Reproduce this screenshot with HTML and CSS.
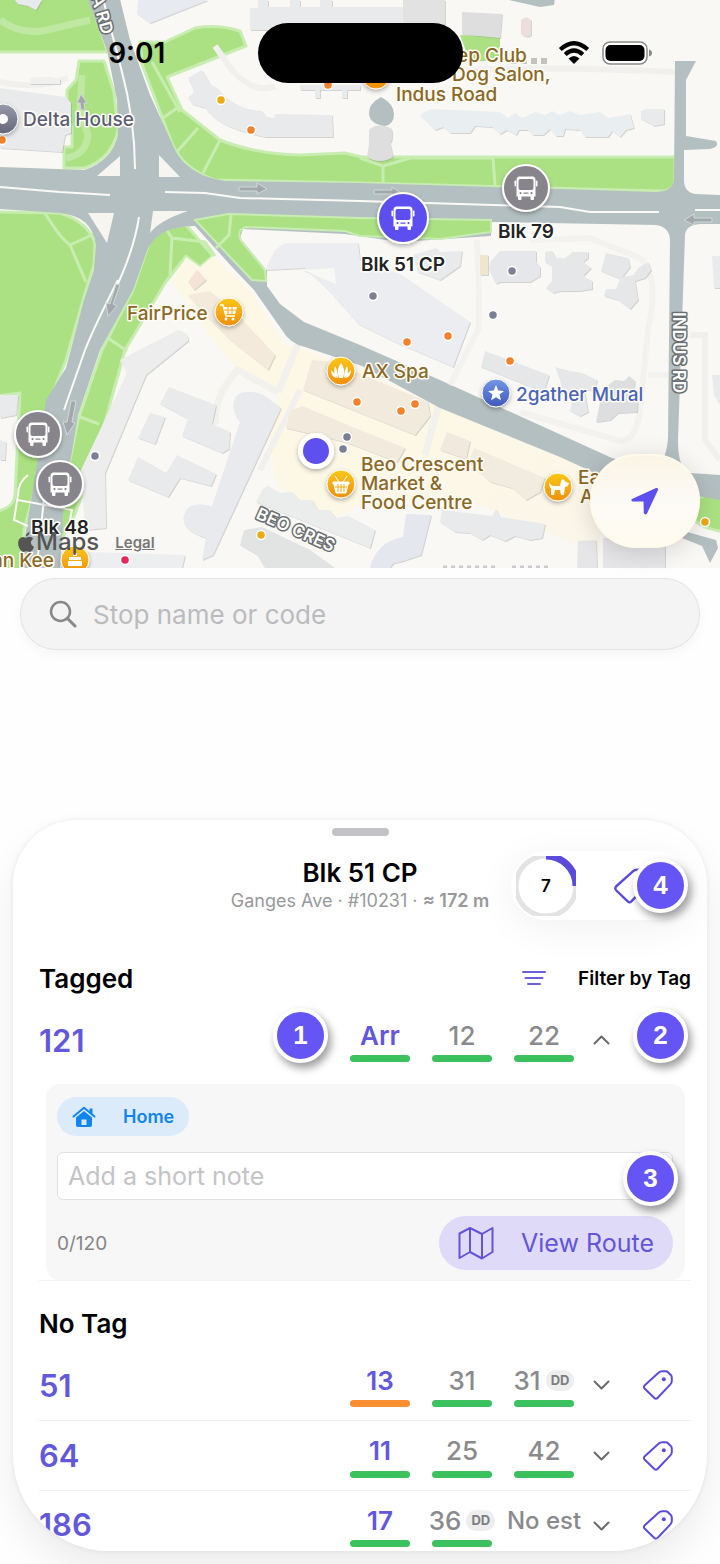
FILE: index.html
```html
<!DOCTYPE html>
<html lang="en">
<head>
    <meta charset="UTF-8">
    <meta name="viewport" content="width=device-width, initial-scale=1.0">
    <title>Bus stops</title>
    <link rel="stylesheet" href="styles.css">
</head>
<body>
    <!-- shared icons -->
    <svg class="sprite" aria-hidden="true">
        <symbol id="bus" viewBox="-14 -14 28 28">
            <path fill="#fff" fill-rule="evenodd" d="M-6.500-11.500H6.500Q9.500-11.500 9.500-8V8.500H8V11Q8 12 7 12H5.500Q4.500 12 4.500 11V8.500H-4.500V11Q-4.500 12-5.500 12H-7Q-8 12-8 11V8.500H-9.500V-8Q-9.500-11.500-6.500-11.500ZM-5.500-9Q-7.500-9-7.500-7V0Q-7.500 2-5.500 2H5.500Q7.500 2 7.500 0V-7Q7.500-9 5.500-9ZM-5.500 4A1.100 1.100 0 1 0-5.500 6.200A1.100 1.100 0 1 0-5.500 4ZM5.500 4A1.100 1.100 0 1 0 5.500 6.200A1.100 1.100 0 1 0 5.500 4ZM-2.500 4.500V5.700H2.500V4.500Z"/>
            <rect x="-11.500" y="-7.500" width="1.600" height="6" rx=".8" fill="#fff"/>
            <rect x="9.900" y="-7.500" width="1.600" height="6" rx=".8" fill="#fff"/>
        </symbol>
        <symbol id="tag" viewBox="0 0 32 32">
            <path d="M16.500 3.800Q18.200 2.200 20.200 2.200H23.500Q25 2.200 26 3.200L28.800 6Q29.800 7 29.800 8.500V12Q29.800 14 28.400 15.400L15.500 29Q14 30.600 12.400 29L2.800 19.800Q1 17.800 2.800 16.200Z" fill="none" stroke="currentColor" stroke-width="2" stroke-linejoin="round"/>
            <circle cx="21.800" cy="10.200" r="2" fill="currentColor"/>
        </symbol>
        <symbol id="chevron" viewBox="0 0 18 12">
            <path d="M2 2.500 9 9.500 16 2.500" fill="none" stroke="currentColor" stroke-width="2" stroke-linecap="round" stroke-linejoin="round"/>
        </symbol>
    </svg>

    <main class="app">
        <section class="map">
            <svg class="map-canvas" viewBox="0 0 720 568" role="img" aria-label="Map">
                <defs>
                    <linearGradient id="gold" x1="0" y1="0" x2="0" y2="1"><stop offset="0" stop-color="#fac818"/><stop offset="1" stop-color="#f08f0d"/></linearGradient>
                    <linearGradient id="blue" x1="0" y1="0" x2="0" y2="1"><stop offset="0" stop-color="#7397e6"/><stop offset="1" stop-color="#4058bb"/></linearGradient>
                    <linearGradient id="slate" x1="0" y1="0" x2="0" y2="1"><stop offset="0" stop-color="#989aa8"/><stop offset="1" stop-color="#64677b"/></linearGradient>
                    <linearGradient id="shops" x1="0" y1="0" x2="1" y2="1"><stop offset=".6" stop-color="#fdf7e6"/><stop offset="1" stop-color="#fbf6ea"/></linearGradient>
                    <filter id="drop" x="-50%" y="-50%" width="200%" height="200%"><feDropShadow dx="0" dy="2" stdDeviation="2" flood-opacity=".3"/></filter>
                    <filter id="lift"><feDropShadow dx="1" dy="1" stdDeviation=".4" flood-color="#8a8a90" flood-opacity=".35"/></filter>
                </defs>
                <rect width="720" height="568" fill="#f9f8f4"/>

                <!-- parks -->
                <g fill="#abe183" stroke="#c8edb1" stroke-width="3" stroke-linejoin="round">
                    <path d="M-5-5H88L108 52H-5Z"/>
                    <path d="M79 61H104L114 92 118 130Q112 158 85 168H64V147H72V128L67 118V90L76 80Z"/>
                    <path d="M140 42 165 42 195 28Q218 24 240 31L246 46 167 77 182 110 220 140Q255 154 300 155L345 153 362 157H675V181Q673 192 660 191L360 183 215 180Q185 170 173 146L142 64Z"/>
                    <path d="M-5 212 60 213Q88 222 95 243L94 265 86 290 66 360 52 395 40 470 24 530 20 575H-5V512Q14 508 15 495L20 393 -5 396Z"/>
                    <path d="M150 240 165 228 186 225 213 256 200 267 186 256 165 283 125 350 100 440 82 475 82 495 72 522 58 545 62 500 78 420 102 350 133 290Z"/>
                    <path d="M695 500Q710 492 725 490V532Q700 528 695 520Z"/>
                    <path d="M460 35 500 37V60L470 62Z" stroke="none"/>
                </g>

                <!-- shops area -->
                <path d="M186 257 200 267 213 256 248 288 285 345 305 350 360 370 430 402 600 472V555L480 505 440 498 360 505 330 520 277 486 268 430 278 392 237 370 205 330 172 282Z" fill="url(#shops)"/>
                <path d="M278 392 237 370 228 382Q215 400 215 425M298 344 278 392M440 400 425 455" fill="none" stroke="#f3f1ec" stroke-width="7"/>

                <!-- footpaths -->
                <g fill="none" stroke="#c8edb1" stroke-width="3">
                    <path d="M45 213Q60 238 70 245L86 282M70 245 94 234M152 62 180 112M160 120 180 106M176 153 198 128M203 173 220 140M155 212 172 238 205 242 215 256M172 238 170 275M108 338 127 351M80 417 99 424M360 158 383 166 383 182M383 166 410 158H493L495 185"/>
                    <path d="M82 75 80 110 88 135Q86 155 66 158M0 20Q25 38 55 28L90 20" stroke-width="7" opacity=".7"/>
                </g>
                <path d="M215 46 232 70Q255 95 275 86M460 70Q560 66 675 72M0 82Q40 90 68 78M300 390 260 470M690 335H705V440L720 460" fill="none" stroke="#f2f0ee" stroke-width="6"/>

                <!-- buildings -->
                <g fill="#e9eaec" filter="url(#lift)">
                    <path d="M138 0H208L150 23 137 14Z" fill="#e7eaf1"/>
                    <path d="M15 0H42L36 10 28 6 18 4Z"/>
                    <path d="M250 8H258V0H268V7H290V0H300V7H320V0H332V7H420V30H250Z"/>
                    <path d="M188 78 202 70 210 84 217 88Q235 110 262 111L266 117 274 118 275 114 332 115 333 137 265 137Q218 128 205 108L192 104 188 98 194 92Z"/>
                    <path d="M0 88 66 97 71 103V133L65 135 62 152 0 148Z"/>
                    <path d="M30 78Q45 75 60 79V84H30Z" fill="#f0f0ef"/>
                    <path d="M300 85H360V90H347V98H342V90H320V98H315V90H300Z"/>
                    <path d="M462 12 502 14 500 38 462 34Z" fill="#dededf"/>
                    <path d="M403 0H445V24H403Z" fill="#e2e2e3"/>
                    <path d="M521 20Q526 15 531 20V35Q526 39 521 34Z" fill="#ecdedd"/>
                    <path d="M420 115 430 109 500 112 508 118 515 113 522 118 535 112 545 115 552 111 560 115 570 111 580 115 600 112 608 118 630 114 634 128 626 130 620 137 612 131 608 137 585 137 580 130 565 129 563 136 556 136 550 129 543 135 533 135 528 130 519 130 516 135 507 130 500 134 492 127 475 126 470 133 450 133 443 127 435 130Z" fill="#e9eff0"/>
                    <path d="M641 111 646 109H664V124L654 126 641 119Z"/>
                    <path d="M369 130Q376 122 391 128 394 137 390 143L393 157Q380 165 367 157L369 144Z" fill="#dedede"/>
                    <path d="M120 360 178 330Q190 334 188 341L146 375 105 473 106 528 85 530 81 470 127 373Z" fill="#ededed"/>
                    <path d="M169 387 216 405 212 424 230 432 229 449 222 453 182 436 188 419 160 404Z"/>
                    <path d="M150 413 165 417 155 444 138 438Z"/>
                    <path d="M138 457 166 473 177 455 216 474 211 486 180 478 168 497 128 480Z"/>
                    <path d="M235 398Q240 388 262 394L281 408 213 555 202 560 206 538Q180 530 184 515T212 506L240 422Q230 410 235 398Z" fill="#e8eaee"/>
                    <path d="M188 295 210 291 240 318 275 355 268 370 230 340 210 320Z" fill="#f3eadc"/>
                    <path d="M188 282 197 270 206 280 194 290Z" fill="#f5e3d7"/>
                    <path d="M312 360 332 362 428 402 430 416 415 435 303 390Z" fill="#f2ebdd"/>
                    <path d="M290 411 302 406 360 430 405 448 397 462 345 442 286 428Z" fill="#f2ebdd"/>
                    <path d="M447 432 470 441 466 459 440 450Z" fill="#f1e9dd"/>
                    <path d="M474 448 545 478 540 492 526 500 512 488 490 482 468 462Z" fill="#f1ecdf"/>
                    <path d="M262 490 268 486 280 493 292 492 300 500 312 500 318 510 330 510 336 518 348 516 375 530 370 548 256 502Z" fill="#ebecec"/>
                    <path d="M244 530 262 527 310 550 335 568H265L257 555 240 545Z" fill="#e2e4e3"/>
                    <path d="M442 510 492 516 496 509 500 517 545 524 542 538 530 540 515 536 505 541 490 535 482 540 470 533 455 532 440 522Z"/>
                    <path d="M406 514 431 515 421 555 400 562Q392 562 390 568H370Q376 542 403 537Z" fill="#e4e7ed"/>
                    <path d="M55 551 185 555 182 568H52Z" fill="#eceef0"/>
                    <path d="M578 541 596 540 597 568H577ZM603 538H665V568H603Z" fill="#e6e6e8"/>
                    <path d="M0 440 6 442 5 460 0 460ZM0 395 18 395 16 415 0 418Z"/>
                    <path d="M712 256H720V288H714ZM712 375H720V405L714 395Z"/>
                </g>
                <path d="M443 567H498M512 567H550" stroke="#c9cbcf" stroke-width="3" stroke-dasharray="4 4"/>
                <path d="M511 61H548" stroke="#c4c2bd" stroke-width="6" stroke-dasharray="6 4"/>

                <!-- roads -->
                <g fill="#b4bfc1">
                    <path d="M86-5 107 50 117 100 118 135Q112 160 85 170L0 167V209L60 213Q92 216 96 245L94 270 84 300 66 368 46 400 36 470 20 568H60L64 500 78 415 100 350 133 290 148 248Q160 226 195 226L233 268 254 290 282 330Q290 344 305 347L362 366 440 408 560 457 610 480 720 500V475L690 473Q678 470 678 440L685 235Q686 225 700 224H720V195L695 194Q684 192 684 180L684 150 710 149Q720 147 716 141L686 136V80L696 61H675L674 180Q672 192 655 192L560 189 360 183 225 181Q190 176 176 152L150 95 130 40 119-5Z"/>
                    <path d="M500-2H555L554 5 540 7Z"/>
                    <path d="M385 126Q370 124 369 114T381 97Q394 104 394 114T385 126Z"/>
                    <path d="M680 530 716 540 718 548 710 563 702 546 682 538Z"/>
                </g>

                <!-- block south of Ganges Avenue -->
                <path d="M243 229 345 234 400 242 491 236V222L656 225Q670 227 670 241L668 438Q666 468 648 468L612 458 440 380 360 345 304 322 280 304 267 286V271L240 238Z" fill="#f9f8f4"/>
                <path d="M195 220 228 214 360 218 491 220V232L440 239 360 236 345 231 246 227Q236 230 241 241L265 270 266 281 252 280Z" fill="#abe183" stroke="#c8edb1" stroke-width="2"/>
                <path d="M231 215 229 235 216 248" fill="none" stroke="#c8edb1" stroke-width="3"/>
                <path d="M530 240 590 238 640 258Q660 275 648 330L640 410Q635 450 610 438L520 412M477 240Q480 300 478 330L450 385M648 375H668" fill="none" stroke="#f3f2ef" stroke-width="6"/>
                <g fill="#e5e7e8" filter="url(#lift)">
                    <path d="M265 270 275 250 285 243H358L360 260 400 274 470 322 453 367 395 342 358 324 330 292 305 268Z" fill="#ecedf0"/>
                    <path d="M303 270 334 268 336 284Z" fill="#f8f8f5"/>
                    <path d="M413 255 436 248 440 252 462 251 460 266 440 280 418 272Z" fill="#e8eaeb"/>
                    <path d="M480 255H488V275H480Z" fill="#eee6cd"/>
                    <path d="M490 262 500 251H536V262L540 267V276L530 282H500L496 284 489 270Z" fill="#e6e7ea"/>
                    <path d="M545 252 552 251 556 258 565 258 573 252H588V258L583 262 591 268 583 276 592 281V289L580 291H560L553 293 546 288 552 281V266L545 262Z"/>
                    <path d="M606 253 628 258 630 267 622 277 634 275 638 268 648 262 651 270 645 278 635 281 638 300 630 309 618 300 604 296 606 289 616 289 620 279 601 271Z"/>
                    <path d="M485 351 549 375 544 392 481 367Z"/>
                    <path d="M555 367 570 371 582 373 597 380 594 391 584 389 586 400 588 412 580 416 570 411 572 402 562 390 560 380Z"/>
                    <path d="M600 402 610 392 607 386 615 380 624 381 629 376 635 381 634 388 638 394 637 412 618 413 610 420 596 422Z" fill="#dcdedf"/>
                </g>

                <!-- traffic islands and lane lines -->
                <path d="M120 156V176H97ZM159 155 180 177H159ZM88 213H114L107 243ZM153 211H188Q160 220 150 233Z" fill="#f7f5ef"/>
                <g fill="none" stroke="#fbfaf6" stroke-width="2">
                    <path d="M102-5 121 68Q135 120 135 169M0 187 60 192 110 195M165 192 205 193 240 198 360 201 560 207 590 212H659M695 210H720M139 217Q134 250 115 290M118 280Q95 325 85 350L64 410M46 480 38 555"/>
                    <path d="M28 475Q18 482 18 495L14 520 28 526M18 500 72 510 66 540"/>
                </g>
                <g fill="#a3a9ab" stroke="#d3d8d8" stroke-width="1">
                    <path d="M239 187H257V183L267 189 257 194V191H239ZM374 190H392V187L401 193 392 197V194H374ZM712 218H694V214L684 220 694 225V222H712Z"/>
                    <path d="M120 285 113 304 117 306 108 316 106 303 110 304 116 284ZM76 401 72 422 75 423 67 435 63 422 67 422 71 401Z"/>
                    <path d="M81 110 80 103H77L81 94 87 103H84L85 110Z"/>
                </g>

                <!-- road names -->
                <g class="road-name">
                    <text transform="translate(80 -42) rotate(74)">DELTA RD</text>
                    <text transform="translate(673 312) rotate(90)">INDUS RD</text>
                    <text transform="translate(255 518) rotate(24)">BEO CRES</text>
                </g>

                <!-- small places -->
                <g stroke="#fff" stroke-width="1.500">
                    <g fill="#f5822a"><circle cx="251" cy="130" r="4.500"/><circle cx="328" cy="85" r="4.500"/><circle cx="2" cy="140" r="4.500"/><circle cx="407" cy="342" r="4.500"/><circle cx="448" cy="336" r="4.500"/><circle cx="510" cy="361" r="4.500"/><circle cx="357" cy="402" r="4.500"/><circle cx="401" cy="411" r="4.500"/><circle cx="415" cy="404" r="4.500"/></g>
                    <g fill="#ecab12"><circle cx="221" cy="100" r="4.500"/><circle cx="261" cy="535" r="4.500"/><circle cx="705" cy="522" r="4.500"/></g>
                    <g fill="#7c8095"><circle cx="512" cy="271" r="4.500"/><circle cx="373" cy="296" r="4.500"/><circle cx="493" cy="315" r="4.500"/><circle cx="95" cy="456" r="4.500"/><circle cx="347" cy="437" r="4.500"/><circle cx="343" cy="449" r="4.500"/></g>
                    <circle cx="125" cy="560" r="4.500" fill="#e6265c"/>
                </g>

                <!-- places -->
                <g stroke="#fff" stroke-width="1" filter="url(#drop)">
                    <circle cx="3" cy="119" r="15" fill="url(#slate)"/>
                    <circle cx="229" cy="312" r="14" fill="url(#gold)"/>
                    <circle cx="341" cy="371" r="14" fill="url(#gold)"/>
                    <circle cx="341" cy="484" r="14" fill="url(#gold)"/>
                    <circle cx="558" cy="487" r="14" fill="url(#gold)"/>
                    <circle cx="376" cy="75" r="14" fill="#f5920f"/>
                    <circle cx="75" cy="560" r="14" fill="url(#gold)"/>
                    <circle cx="496" cy="393" r="14" fill="url(#blue)"/>
                </g>
                <g fill="#fff">
                    <circle cx="3" cy="119" r="5"/>
                    <path d="M496 385 498.200 390.500 504 391 499.500 394.600 501 400.300 496 397.200 491 400.300 492.500 394.600 488 391 493.800 390.500Z"/>
                    <path d="M341 363Q346 369 343 378H339Q336 369 341 363ZM335 366Q338 371 338 378 332 373 335 366ZM347 366Q344 371 344 378 350 373 347 366ZM331 370Q335 373 337 378 331 377 331 370ZM351 370Q347 373 345 378 351 377 351 370Z"/>
                    <path d="M333 482H349V484H348L346 493H336L334 484H333ZM335 476 339 482M347 476 343 482" stroke="#fff" stroke-width="1"/>
                    <path d="M549 482Q551 486 554 486H560L561 481 563 479 566 482 569 483Q568 487 565 487L564 495H561L560 490H555L554 495H551V488Q549 487 549 482Z"/>
                    <path d="M68 561H82V566H68ZM69 557H81V560H69ZM73 553H77V556H73Z"/>
                    <circle cx="226" cy="319" r="1.500"/><circle cx="233" cy="319" r="1.500"/>
                    <path d="M223 307H237L235 314H225Z"/>
                </g>
                <path d="M220 305H223L226 316H235" fill="none" stroke="#fff" stroke-width="1.500"/>
                <path d="M224 310H236M228 307V314M232 307V314M335 487H347M338 484V492M341 484V492M344 484V492" stroke="#f3ab13" stroke-width="1" fill="none"/>

                <g class="place">
                    <text x="457" y="62">ep Club</text>
                    <text x="452" y="81">Dog Salon,</text>
                    <text x="396" y="101">Indus Road</text>
                    <text x="127" y="320">FairPrice</text>
                    <text x="362" y="378">AX Spa</text>
                    <text x="361" y="471">Beo Crescent</text>
                    <text x="361" y="490">Market &amp;</text>
                    <text x="361" y="509">Food Centre</text>
                    <text x="578" y="484">East</text>
                    <text x="580" y="503">Ave</text>
                    <text x="-8" y="567">an Kee</text>
                    <text x="23" y="126" class="building">Delta House</text>
                    <text x="516" y="401" class="landmark">2gather Mural</text>
                </g>

                <!-- my position -->
                <circle cx="316" cy="451" r="18" fill="#fff" filter="url(#drop)"/>
                <circle cx="316" cy="451" r="13" fill="#5d50ef"/>

                <!-- bus stops -->
                <g stroke="#fff" stroke-width="2" fill="#87858b" filter="url(#drop)">
                    <circle cx="526" cy="188" r="23"/>
                    <circle cx="38" cy="434" r="23"/>
                    <circle cx="60" cy="484" r="23"/>
                    <circle cx="403" cy="218" r="25" fill="#5d50ef"/>
                </g>
                <use href="#bus" x="512" y="174" width="28" height="28"/>
                <use href="#bus" x="24" y="420" width="28" height="28"/>
                <use href="#bus" x="46" y="470" width="28" height="28"/>
                <use href="#bus" x="389" y="204" width="28" height="28"/>
                <g class="stop-name">
                    <text x="526" y="238">Blk 79</text>
                    <text x="403" y="271">Blk 51 CP</text>
                    <text x="60" y="534">Blk 48</text>
                </g>
            </svg>

            <div class="status-bar">
                <time class="clock">9:01</time>
                <div class="island"></div>
                <div class="status-icons">
                    <svg width="32" height="24" viewBox="0 0 32 24" aria-label="Wi-Fi">
                        <path d="M2.300 8.500Q16-4 29.700 8.500M7.200 13.500Q16 5.500 24.800 13.500" fill="none" stroke="#000" stroke-width="4.200"/>
                        <path d="M10.500 17.500Q16 12.500 21.500 17.500L16 23Z"/>
                    </svg>
                    <svg width="50" height="24" viewBox="0 0 50 24" aria-label="Battery">
                        <rect x="1" y="1" width="44" height="22" rx="7" fill="#fff" stroke="#8b8b89" stroke-width="1.500"/>
                        <rect x="3.500" y="4" width="39" height="16" rx="5"/>
                        <path d="M47 8.500Q50 9.500 50 12T47 15.500Z" fill="#8b8b89"/>
                    </svg>
                </div>
            </div>

            <div class="attribution">
                <span class="maps-logo">
                    <svg width="16" height="20" viewBox="0 0 16 20" aria-hidden="true"><path fill="currentColor" d="M8 6Q9.500 4.800 11.500 4.800 14 5 15.200 6.800 12.600 8.500 12.900 11 13.200 13.800 16 15 14.300 19.600 11.800 20 10 19.300 8.500 19.200 7 19.300 5.400 20 3.500 20 1.500 16.500-.800 12 .800 7.800 2.300 4.900 5 4.900 6.500 5 8 6ZM7.800 4.500Q7.800 1.300 11.500 0 11.500 3.500 7.800 4.500Z"/></svg>
                    Maps
                </span>
                <a href="#legal">Legal</a>
            </div>

            <button class="locate" type="button" aria-label="My location">
                <svg width="30" height="30" viewBox="0 0 30 30"><path d="M26 2 2 13Q.500 14.500 2.500 15.500H13.500L13.800 27Q15 29.500 17 27.500L28 4Q28.500 1.500 26 2Z" fill="#5d50ef"/></svg>
            </button>
        </section>

        <form class="search">
            <label for="stop-search" aria-label="Search stops">
                <svg width="28" height="28" viewBox="0 0 28 28"><circle cx="11.500" cy="11.500" r="9.500" fill="none" stroke="#88888a" stroke-width="2.500"/><path d="M18.500 18.500 26 26" stroke="#88888a" stroke-width="3" stroke-linecap="round"/></svg>
            </label>
            <input id="stop-search" type="text" placeholder="Stop name or code">
        </form>

        <section class="sheet">
            <header class="sheet-header">
                <div class="handle"></div>
                <div class="stop">
                    <h1>Blk 51 CP</h1>
                    <p>Ganges Ave · #10231 · <b>≈ 172 m</b></p>
                </div>
                <div class="actions">
                    <div class="countdown">
                        <svg width="60" height="60" viewBox="0 0 60 60" aria-hidden="true">
                            <circle cx="30" cy="30" r="30" fill="none" stroke="#e3e3e3" stroke-width="5"/>
                            <path d="M30 0A30 30 0 0 1 60 30" fill="none" stroke="#5b4bdb" stroke-width="7"/>
                        </svg>
                        <span>7</span>
                    </div>
                    <button class="icon-button" type="button" aria-label="Tag stop"><svg class="tag-large"><use href="#tag"/></svg></button>
                    <span class="marker marker-4">4</span>
                </div>
            </header>

            <div class="section-head">
                <h2>Tagged</h2>
                <button class="filter" type="button">
                    <svg width="24" height="16" viewBox="0 0 24 16"><path d="M1 2H23M3.500 8H20.500M6 14H18" stroke="#6b5fdc" stroke-width="2" stroke-linecap="round"/></svg>
                    Filter by Tag
                </button>
            </div>
            <div class="service">
                <span class="number">121</span>
                <span class="marker marker-1">1</span>
                <div class="arrivals">
                    <span class="arrival next">Arr</span>
                    <span class="arrival">12</span>
                    <span class="arrival">22</span>
                </div>
                <button class="toggle open" type="button" aria-label="Collapse"><svg><use href="#chevron"/></svg></button>
                <span class="marker marker-2">2</span>
            </div>
            <div class="details">
                <div class="panel">
                    <button class="chip" type="button">
                        <svg width="24" height="22" viewBox="0 0 24 22"><path d="M1.500 10.500 12 1.800 22.500 10.500" fill="none" stroke="currentColor" stroke-width="2" stroke-linecap="round" stroke-linejoin="round"/><path fill="currentColor" fill-rule="evenodd" d="M17.500 2.500H20.500V8L17.500 5.500ZM12 5 20 11.500V19Q20 21 18 21H6Q4 21 4 19V11.500ZM9.500 13.500V19H14.500V13.500Z"/></svg>
                        Home
                    </button>
                    <div class="note">
                        <input id="note" type="text" maxlength="120" placeholder="Add a short note" aria-label="Add a short note">
                        <span class="marker marker-3">3</span>
                    </div>
                    <div class="panel-foot">
                        <label class="count" for="note">0/120</label>
                        <button class="route" type="button">
                            <svg width="36" height="34" viewBox="0 0 36 34"><path d="M1.500 7.500 12 2 24 8 34.500 2V26L24 32.500 12 26 1.500 32ZM12 2V26M24 8V32.500" fill="none" stroke="currentColor" stroke-width="2" stroke-linejoin="round"/></svg>
                            View Route
                        </button>
                    </div>
                </div>
            </div>

            <div class="section-head untagged">
                <h2>No Tag</h2>
            </div>
            <div class="service">
                <span class="number">51</span>
                <div class="arrivals">
                    <span class="arrival next busy">13</span>
                    <span class="arrival">31</span>
                    <span class="arrival">31<i class="deck">DD</i></span>
                </div>
                <button class="toggle" type="button" aria-label="Expand"><svg><use href="#chevron"/></svg></button>
                <button class="icon-button" type="button" aria-label="Tag 51"><svg class="tag"><use href="#tag"/></svg></button>
            </div>
            <div class="service">
                <span class="number">64</span>
                <div class="arrivals">
                    <span class="arrival next">11</span>
                    <span class="arrival">25</span>
                    <span class="arrival">42</span>
                </div>
                <button class="toggle" type="button" aria-label="Expand"><svg><use href="#chevron"/></svg></button>
                <button class="icon-button" type="button" aria-label="Tag 64"><svg class="tag"><use href="#tag"/></svg></button>
            </div>
            <div class="service">
                <span class="number">186</span>
                <div class="arrivals">
                    <span class="arrival next">17</span>
                    <span class="arrival">36<i class="deck">DD</i></span>
                    <span class="arrival none">No est</span>
                </div>
                <button class="toggle" type="button" aria-label="Expand"><svg><use href="#chevron"/></svg></button>
                <button class="icon-button" type="button" aria-label="Tag 186"><svg class="tag"><use href="#tag"/></svg></button>
            </div>
        </section>
    </main>
</body>
</html>
```
FILE: styles.css
```css
* { box-sizing: border-box; }
body {
    margin: 0;
    background: #fefefe;
    color: #000;
    font-family: Inter, "Liberation Sans", sans-serif;
}
button, input { font: inherit; color: inherit; border: 0; padding: 0; background: none; }
button { cursor: pointer; }
h1, h2, p { margin: 0; }
svg { display: block; }
.sprite { display: none; }
.app {
    min-height: 100vh;
    display: flex;
    flex-direction: column;
    overflow: hidden;
}

/* map */
.map { position: relative; }
.map-canvas { width: 100%; height: auto; }
.map text { font-weight: 600; paint-order: stroke; stroke-linejoin: round; }
.place text { font-size: 19px; font-weight: 500; fill: #8a6826; stroke: #fffdf6; stroke-width: 3px; }
.place .building { fill: #5c5d75; }
.place .landmark { fill: #4a64b8; }
.stop-name text { font-size: 19px; fill: #232323; stroke: #fff; stroke-width: 3px; text-anchor: middle; }
.road-name text { font-size: 17px; fill: #fff; stroke: #6a6e70; stroke-width: 3px; }
.status-bar {
    position: absolute;
    top: 23px;
    left: 0;
    right: 0;
    display: grid;
    grid-template-columns: 1fr 205px 1fr;
    align-items: center;
}
.clock { justify-self: center; font-size: 28px; font-weight: 600; padding-left: 16px; }
.island { height: 60px; border-radius: 30px; background: #000; }
.status-icons { display: flex; justify-content: center; gap: 12px; padding-left: 28px; }
.attribution {
    position: absolute;
    left: 18px;
    bottom: 10px;
    display: flex;
    align-items: center;
    gap: 16px;
    color: #555;
}
.maps-logo { display: flex; align-items: center; gap: 2px; font-size: 24px; font-weight: 500; line-height: 32px; }
.attribution a { color: #777; font-size: 15px; font-weight: 600; }
.locate {
    position: absolute;
    right: 20px;
    bottom: 20px;
    width: 110px;
    height: 94px;
    display: grid;
    place-items: center;
    border: 2px solid #fffaea;
    border-radius: 47px;
    background: linear-gradient(#fcf5e6, #fcfaf6 50%, #fffbef);
    box-shadow: 0 4px 24px rgba(0, 0, 0, 0.15);
}

.search {
    position: relative;
    margin: 10px 20px 0;
    height: 72px;
    display: flex;
    align-items: center;
    gap: 16px;
    padding: 0 28px;
    border: 1px solid #e3e3e3;
    border-radius: 36px;
    background: #f4f4f4;
    box-shadow: 0 4px 12px rgba(0, 0, 0, 0.04);
}
.search input { flex: 1; min-width: 0; font-size: 26px; outline: none; }
.search input::placeholder { color: #bbbbbd; opacity: 1; }

/* bottom sheet */
.sheet {
    margin: auto 13px 13px;
    padding: 0 16px 0 26px;
    border-radius: 64px 64px 96px 96px;
    background: #fff;
    box-shadow: 0 0 5px rgba(0, 0, 0, 0.08), 0 20px 36px rgba(0, 0, 0, 0.07);
    overflow: hidden;
}
.sheet-header {
    display: grid;
    grid-template-columns: 1fr auto 1fr;
    align-items: center;
    margin: 0 -16px 31px -26px;
    padding-top: 8px;
    row-gap: 15px;
}
.handle { grid-column: 1 / -1; justify-self: center; width: 57px; height: 8px; border-radius: 4px; background: #c3c3c7; }
.stop { grid-column: 2; text-align: center; }
.stop h1 { font-size: 26px; font-weight: 600; line-height: 30px; }
.stop p { color: #98989b; font-size: 18px; line-height: 25px; }
.stop b { font-weight: 600; }
.actions {
    position: relative;
    justify-self: end;
    width: 180px;
    height: 69px;
    margin-right: 16px;
    padding: 0 40px 0 5px;
    display: flex;
    align-items: center;
    justify-content: space-between;
    border-radius: 35px;
    background: #fff;
    box-shadow: 0 8px 40px rgba(0, 0, 0, 0.06);
}
.countdown { display: grid; place-items: center; }
.countdown > * { grid-area: 1 / 1; }
.countdown span { font-size: 17px; font-weight: 600; }
.icon-button { color: #5b4bdb; }
.tag { width: 32px; height: 32px; }
.tag-large { width: 38px; height: 42px; }
.marker {
    position: absolute;
    width: 55px;
    height: 55px;
    border: 4px solid #fff;
    border-radius: 50%;
    background: #6655f5;
    color: #fff;
    font: bold 26px/47px "Liberation Sans", sans-serif;
    text-align: center;
    box-shadow: 3px 5px 9px rgba(0, 0, 0, 0.4);
}
.marker-1 { right: 363px; top: 3px; }
.marker-2 { right: 3px; top: 3px; }
.marker-3 { right: -5px; top: -1px; }
.marker-4 { right: 3px; top: 7px; }
.section-head { display: flex; align-items: center; justify-content: space-between; height: 54px; }
.section-head h2 { font-size: 26px; font-weight: 600; }
.untagged { margin-top: 15px; }
.filter { display: flex; align-items: center; gap: 32px; font-size: 19px; font-weight: 600; }

.service { position: relative; display: flex; align-items: center; height: 70px; }
.service + .service { border-top: 1px solid #f0f0f1; }
.service:last-child { height: 61px; align-items: flex-start; padding-top: 12px; }
.service:last-child .number { padding-top: 3px; }
.service:last-child .toggle { padding-top: 17px; }
.service:last-child .icon-button { padding-top: 6px; }
.number { flex: 1; color: #6458da; font-size: 31px; font-weight: 600; }
.arrivals { display: flex; gap: 22px; }
.arrival {
    position: relative;
    width: 60px;
    height: 44px;
    display: flex;
    align-items: center;
    justify-content: center;
    padding-bottom: 10px;
    color: #8a8a8d;
    font-size: 26px;
    font-weight: 500;
    white-space: nowrap;
}
.arrival::after {
    content: "";
    position: absolute;
    left: 0;
    right: 0;
    bottom: 0;
    height: 7px;
    border-radius: 4px;
    background: #3bc25e;
}
.arrival.next { color: #6456dd; font-weight: 600; }
.arrival.busy::after { background: #fa8f31; }
.arrival.none { font-size: 24px; }
.arrival.none::after { display: none; }
.deck {
    margin-left: 5px;
    padding: 0 5px;
    border-radius: 10px;
    background: #eee;
    color: #7e7e80;
    font-size: 13px;
    font-style: normal;
    font-weight: 700;
    line-height: 21px;
}
.toggle { margin: 0 31px 0 18px; color: #6a6a6c; }
.toggle svg { width: 19px; height: 12px; }
.toggle.open { margin-right: 80px; }
.open svg { transform: rotate(180deg); }
.service .icon-button { margin-right: 17px; }

/* expanded service */
.details { padding: 9px 6px 0 7px; border-bottom: 1px solid #f0f0f1; }
.panel { padding: 13px 12px 10px 11px; border-radius: 14px; background: #f7f7f7; }
.chip {
    display: flex;
    align-items: center;
    gap: 27px;
    height: 39px;
    padding: 0 15px;
    border-radius: 20px;
    background: #dcebf9;
    color: #1085f0;
    font-size: 18px;
    font-weight: 600;
}
.note { position: relative; margin: 16px 0; }
.note input {
    display: block;
    width: 100%;
    height: 48px;
    padding: 0 10px;
    border: 1px solid #e0e0e2;
    border-radius: 6px;
    background: #fff;
    font-size: 25px;
}
.note input::placeholder { color: #c4c4c6; opacity: 1; }
.panel-foot { display: flex; align-items: center; justify-content: space-between; }
.count { color: #858588; font-size: 19px; }
.route {
    display: flex;
    align-items: center;
    gap: 27px;
    height: 54px;
    padding: 0 19px;
    border-radius: 27px;
    background: #dedaf7;
    color: #6455d8;
    font-size: 25px;
}
```
